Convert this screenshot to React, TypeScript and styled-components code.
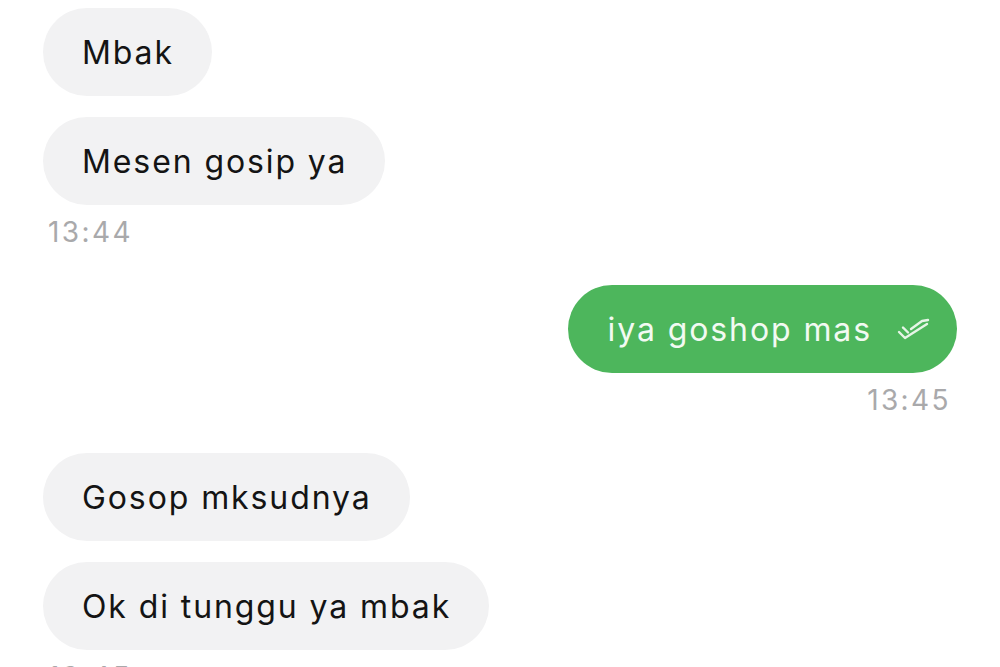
import React from "react";
import styled, { createGlobalStyle } from "styled-components";

const Global = createGlobalStyle`
  html, body { margin: 0; padding: 0; background: #ffffff; }
  body { font-family: Inter, "Open Sans", "Liberation Sans", sans-serif; -webkit-font-smoothing: antialiased; }
  #root { width: 1000px; height: 667px; overflow: hidden; }
`;

const Chat = styled.div`
  display: flex;
  flex-direction: column;
  padding: 8px 43px 0 43px;
  width: 1000px;
  box-sizing: border-box;
`;

const Group = styled.div<{ $mine?: boolean; $top?: number }>`
  display: flex;
  flex-direction: column;
  align-items: ${(p) => (p.$mine ? "flex-end" : "flex-start")};
  gap: 21px;
  margin-top: ${(p) => p.$top ?? 0}px;
`;

const Bubble = styled.div<{ $mine?: boolean }>`
  display: flex;
  align-items: center;
  gap: 24px;
  height: 88px;
  box-sizing: border-box;
  padding: 0 ${(p) => (p.$mine ? "25px" : "38px")} 0 ${(p) => (p.$mine ? "40px" : "39px")};
  border-radius: 44px;
  background: ${(p) => (p.$mine ? "#4db65c" : "#f2f2f3")};
  color: ${(p) => (p.$mine ? "#f2faf2" : "#141414")};
  font-size: 32px;
  letter-spacing: 1.9px;
  white-space: nowrap;
`;

const Time = styled.div<{ $mine?: boolean }>`
  color: #a9a9ab;
  font-size: 28px;
  letter-spacing: 2.4px;
  line-height: 32px;
  margin-top: -10px;
  padding: ${(p) => (p.$mine ? "0 6px 0 0" : "0 0 0 5px")};
`;

const Check = () => (
  <svg width="36" height="26" viewBox="0 0 36 26" fill="none" stroke="#e6f5e7" strokeWidth="2.4" strokeLinecap="round" strokeLinejoin="round">
    <path d="M3 16 L9 22 L31 8" />
    <path d="M7 11.5 L12 16.5" />
    <path d="M15 13 L26 5 L32 4" />
  </svg>
);

export default function App() {
  return (
    <>
      <Global />
      <Chat>
        <Group>
          <Bubble>Mbak</Bubble>
          <Bubble>Mesen gosip ya</Bubble>
          <Time>13:44</Time>
        </Group>
        <Group $mine $top={37}>
          <Bubble $mine>
            iya goshop mas
            <Check />
          </Bubble>
          <Time $mine>13:45</Time>
        </Group>
        <Group $top={37}>
          <Bubble>Gosop mksudnya</Bubble>
          <Bubble>Ok di tunggu ya mbak</Bubble>
          <Time>13:45</Time>
        </Group>
      </Chat>
    </>
  );
}
